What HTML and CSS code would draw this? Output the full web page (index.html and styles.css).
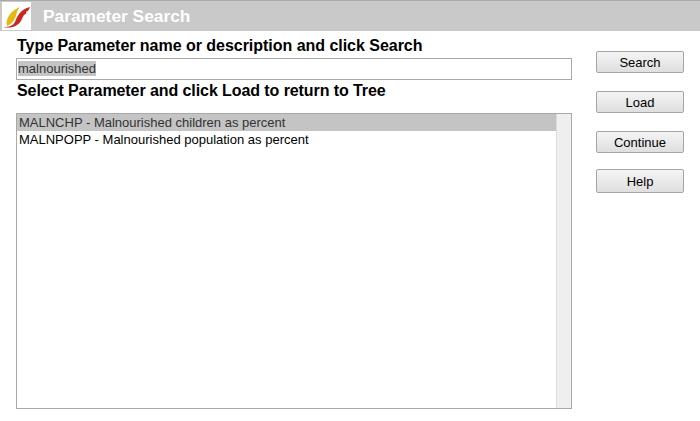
FILE: index.html
```html
<!DOCTYPE html>
<html lang="en">
<head>
<meta charset="utf-8">
<title>Parameter Search</title>
<link rel="stylesheet" href="styles.css">
</head>
<body>
<header class="titlebar">
  <div class="logo">
    <svg width="29" height="28" viewBox="0 0 29 28">
      <path d="M5 24C3 17 9 8 18 5C14 9 15 14 12 18C10 21 8 23 5 24Z" fill="#e8b710"/>
      <path d="M1 25C7 25 11 24 13 20C15 14 19 7 28 5C27 8 26 9 24 10C25 11 24 12 22 13C20 16 19 21 15 23C11 26 5 26 1 25Z" fill="#c8281e"/>
    </svg>
  </div>
  <h1 class="title">Parameter Search</h1>
</header>
<main class="content">
  <section class="form">
    <label class="heading" for="q">Type Parameter name or description and click Search</label>
    <div class="field" id="q"><span class="selected-text">malnourished</span></div>
    <div class="heading heading-second">Select Parameter and click Load to return to Tree</div>
    <div class="listbox">
      <ul class="options">
        <li class="option option-active">MALNCHP - Malnourished children as percent</li>
        <li class="option">MALNPOPP - Malnourished population as percent</li>
      </ul>
      <div class="scrollbar"></div>
    </div>
  </section>
  <aside class="actions">
    <button class="btn">Search</button>
    <button class="btn">Load</button>
    <button class="btn">Continue</button>
    <button class="btn btn-help">Help</button>
  </aside>
</main>
</body>
</html>
```
FILE: styles.css
```css
html, body {
  margin: 0;
  padding: 0;
  background: #fff;
  font-family: "Liberation Sans", Arial, sans-serif;
  color: #000;
}
.titlebar {
  display: flex;
  align-items: center;
  height: 30px;
  background: #c9c9c9;
  border-top: 1px solid #a9a9a9;
}
.logo {
  width: 29px;
  height: 28px;
  margin-left: 2px;
  background: #fff;
  line-height: 0;
}
.title {
  margin: 0 0 0 12px;
  font-size: 17.33px;
  font-weight: bold;
  color: #fff;
  line-height: 30px;
}
.content {
  display: flex;
  padding-left: 16px;
}
.form {
  display: flex;
  flex-direction: column;
  width: 556px;
}
.heading {
  display: block;
  font-size: 16px;
  font-weight: bold;
  line-height: 18px;
  height: 18px;
  margin: 6px 0 0 1px;
  letter-spacing: -0.03px;
  white-space: nowrap;
}
.heading-second {
  margin-top: 2px;
  letter-spacing: -0.08px;
}
.field {
  box-sizing: border-box;
  height: 22px;
  margin-top: 3px;
  border: 1px solid #a9a9a9;
  padding: 2px 1px;
  font-size: 13px;
  line-height: 15px;
}
.selected-text {
  display: inline-block;
  background: #c4c4c4;
  color: #333;
}
.listbox {
  box-sizing: border-box;
  display: flex;
  height: 296px;
  margin-top: 13px;
  border: 1px solid #a9a9a9;
}
.options {
  flex: 1;
  margin: 0;
  padding: 0;
  list-style: none;
}
.option {
  height: 17px;
  padding-left: 2px;
  font-size: 13px;
  line-height: 17px;
  white-space: nowrap;
}
.option-active {
  background: #c4c4c4;
  color: #333;
}
.scrollbar {
  width: 14px;
  background: #efefef;
  border-left: 1px solid #dcdcdc;
}
.actions {
  display: flex;
  flex-direction: column;
  width: 88px;
  margin-left: 24px;
  padding-top: 20px;
}
.btn {
  box-sizing: border-box;
  width: 88px;
  height: 22px;
  margin-bottom: 18px;
  padding: 0;
  border: 1px solid #a6a6a6;
  border-radius: 2px;
  background: linear-gradient(#f4f4f4, #dfdfdf);
  font-family: inherit;
  font-size: 13px;
  color: #000;
}
.btn-help {
  height: 24px;
  margin-top: -2px;
}
```
